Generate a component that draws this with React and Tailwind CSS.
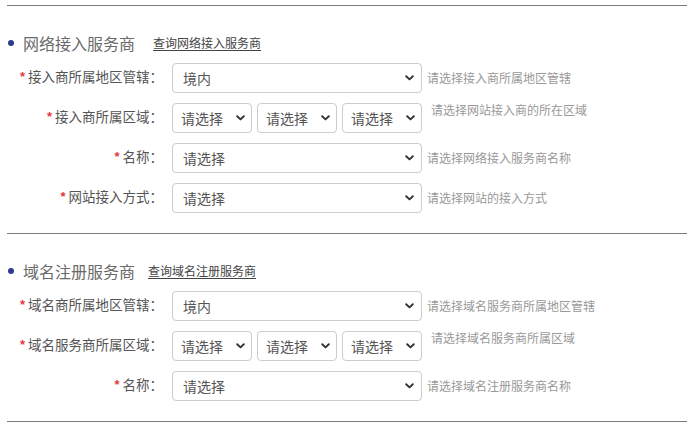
import React from 'react';

const Chevron = () => (
  <svg width="9" height="6" viewBox="0 0 9 6" className="shrink-0">
    <path d="M1.2 1.2 L4.5 4.4 L7.8 1.2" fill="none" stroke="#333" strokeWidth="1.9" strokeLinecap="round" strokeLinejoin="round" />
  </svg>
);

const Select = ({ value, className = '' }) => (
  <div className={`h-[30px] border border-[#cccccc] rounded-[4px] bg-white flex items-center justify-between text-[14px] text-[#555] ${className}`}>
    <span>{value}</span>
    <Chevron />
  </div>
);

const Row = ({ label, hint, triple, value }) => (
  <div className="flex items-start h-[30px]">
    <div className="w-[163px] shrink-0 text-right text-[13.5px] leading-[20px] pt-[3px] text-[#555]">
      <span
        className="inline-block align-top mr-[3px] mt-[4px] text-[13px] leading-[13px] font-bold text-[#e4393c]"
        style={{ fontFamily: '"Liberation Sans", sans-serif' }}
      >
        *
      </span>
      {label}：
    </div>
    <div className="ml-[9px] w-[250px] shrink-0 flex gap-[5px]">
      {triple ? (
        <>
          <Select value="请选择" className="w-[80px] pl-[8px] pr-[6px]" />
          <Select value="请选择" className="w-[80px] pl-[8px] pr-[6px]" />
          <Select value="请选择" className="w-[80px] pl-[8px] pr-[6px]" />
        </>
      ) : (
        <Select value={value} className="w-[250px] pl-[10px] pr-[7px]" />
      )}
    </div>
    {triple ? (
      <div className="ml-[9px] -mt-px text-[12px] leading-[16px] text-[#999]">{hint}</div>
    ) : (
      <div className="ml-[5px] self-center text-[12px] leading-[16px] text-[#999]">{hint}</div>
    )}
  </div>
);

const Section = ({ title, link, linkGap, rows }) => (
  <div className="pt-[27px] pb-[20px]">
    <div className="flex items-center h-[20px]">
      <span className="ml-[8px] w-[6px] h-[6px] rounded-full bg-[#2e3a8f] shrink-0" />
      <span className="ml-[9px] text-[16px] text-[#6a6a6a]">{title}</span>
      <a className={`${linkGap} text-[12px] text-[#444] underline underline-offset-2`}>{link}</a>
    </div>
    <div className="mt-[10px] flex flex-col gap-[10px]">
      {rows.map((r, i) => (
        <Row key={i} {...r} />
      ))}
    </div>
  </div>
);

const Line = () => <div className="ml-[7px] w-[680px] h-px bg-[#777c84]" />;

export default function App() {
  return (
    <div
      className="w-[700px] h-[429px] bg-white pt-[5px] overflow-hidden"
      style={{ fontFamily: '"Noto Sans CJK SC", "Noto Sans", sans-serif' }}
    >
      <Line />
      <Section
        title="网络接入服务商"
        link="查询网络接入服务商"
        linkGap="ml-[18px]"
        rows={[
          { label: '接入商所属地区管辖', value: '境内', hint: '请选择接入商所属地区管辖' },
          { label: '接入商所属区域', triple: true, hint: '请选择网站接入商的所在区域' },
          { label: '名称', value: '请选择', hint: '请选择网络接入服务商名称' },
          { label: '网站接入方式', value: '请选择', hint: '请选择网站的接入方式' },
        ]}
      />
      <Line />
      <Section
        title="域名注册服务商"
        link="查询域名注册服务商"
        linkGap="ml-[13px]"
        rows={[
          { label: '域名商所属地区管辖', value: '境内', hint: '请选择域名服务商所属地区管辖' },
          { label: '域名服务商所属区域', triple: true, hint: '请选择域名服务商所属区域' },
          { label: '名称', value: '请选择', hint: '请选择域名注册服务商名称' },
        ]}
      />
      <Line />
    </div>
  );
}
